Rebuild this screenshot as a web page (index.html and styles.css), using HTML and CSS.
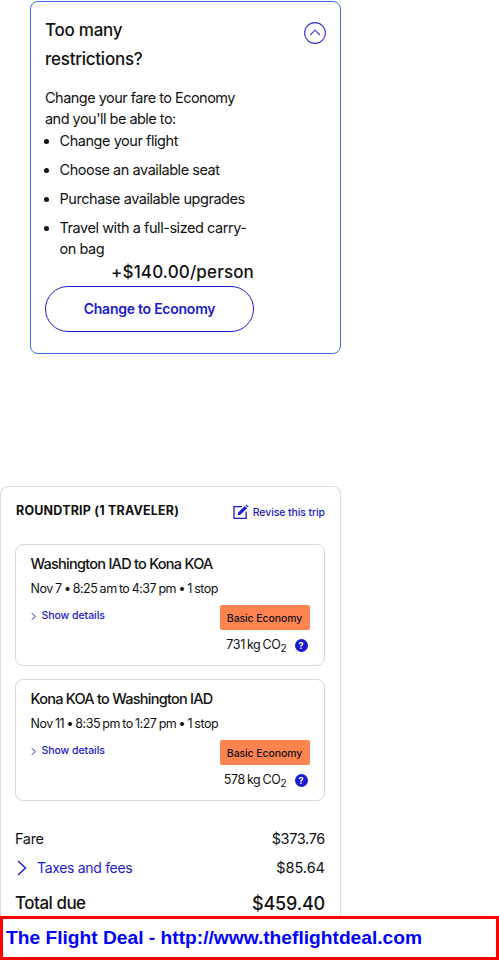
FILE: index.html
```html
<!DOCTYPE html>
<html lang="en">
<head>
<meta charset="utf-8">
<title>Trip summary</title>
<link rel="stylesheet" href="styles.css">
</head>
<body>
<main class="page">
  <section class="upsell">
    <div class="upsell-head">
      <h2 class="upsell-title">Too many restrictions?</h2>
      <svg class="collapse" viewBox="0 0 22 22" aria-hidden="true"><circle cx="11" cy="11" r="10.4"/><path d="M6.2 13 L11 8.2 L15.8 13"/></svg>
    </div>
    <p class="upsell-intro">Change your fare to Economy and you'll be able to:</p>
    <ul class="perks">
      <li>Change your flight</li>
      <li>Choose an available seat</li>
      <li>Purchase available upgrades</li>
      <li>Travel with a full-sized carry-on bag</li>
    </ul>
    <div class="upsell-action">
      <div class="price">+$140.00/person</div>
      <button class="outline-btn">Change to Economy</button>
    </div>
  </section>

  <section class="summary">
    <div class="summary-head">
      <h2 class="summary-title">ROUNDTRIP (1 TRAVELER)</h2>
      <a class="revise">
        <svg viewBox="0 0 16 16" aria-hidden="true"><path class="edit-frame" d="M9 2.6 H1 V14.4 H13.2 V7.5"/><path class="edit-pen" d="M5.2 8.6 L11.8 2 L14 4.2 L7.4 10.8 L4.8 11.2 Z"/><path class="edit-pen" d="M12.6 1.2 L13.4 0.4 L15.6 2.6 L14.8 3.4 Z"/></svg>
        Revise this trip
      </a>
    </div>

    <article class="leg">
      <h3 class="leg-title">Washington IAD to Kona KOA</h3>
      <p class="leg-time">Nov 7 • 8:25 am to 4:37 pm • 1 stop</p>
      <div class="leg-row">
        <a class="details"><svg viewBox="0 0 6 10" aria-hidden="true"><path d="M1 1 L5 5 L1 9"/></svg>Show details</a>
        <div class="leg-fare">
          <span class="badge">Basic Economy</span>
          <div class="co2"><span>731 kg CO<sub>2</sub></span><span class="help">?</span></div>
        </div>
      </div>
    </article>

    <article class="leg">
      <h3 class="leg-title">Kona KOA to Washington IAD</h3>
      <p class="leg-time">Nov 11 • 8:35 pm to 1:27 pm • 1 stop</p>
      <div class="leg-row">
        <a class="details"><svg viewBox="0 0 6 10" aria-hidden="true"><path d="M1 1 L5 5 L1 9"/></svg>Show details</a>
        <div class="leg-fare">
          <span class="badge">Basic Economy</span>
          <div class="co2"><span>578 kg CO<sub>2</sub></span><span class="help">?</span></div>
        </div>
      </div>
    </article>

    <div class="cost-row fare-row"><span>Fare</span><span>$373.76</span></div>
    <div class="cost-row taxes-row">
      <a class="taxes"><svg viewBox="0 0 10 16" aria-hidden="true"><path d="M1 1 L8.5 8 L1 15"/></svg>Taxes and fees</a>
      <span class="tax-amount">$85.64</span>
    </div>
    <div class="cost-row total-row"><span>Total due</span><span class="total-amount">$459.40</span></div>
  </section>
</main>
<div class="banner">The Flight Deal - http://www.theflightdeal.com</div>
</body>
</html>
```
FILE: styles.css
```css
* { box-sizing: border-box; }
html, body { margin: 0; height: 960px; overflow: hidden; }
body { background: #fff; color: #111; font-family: Inter, "Noto Sans", sans-serif; position: relative; }
h2, h3, p, ul { margin: 0; padding: 0; }
.page { width: 341px; padding-top: 1px; }

.upsell { margin-left: 30px; width: 311px; height: 353px; border: 1px solid #3a6fe6; border-radius: 8px; padding: 14px 14px 0; }
.upsell-head { display: flex; justify-content: space-between; }
.upsell-title { width: 130px; font-size: 17px; font-weight: 500; line-height: 29px; letter-spacing: -0.25px; }
.collapse { width: 22px; height: 22px; margin: 6px 0 0; fill: none; stroke: #3a3ad8; stroke-width: 1.1; }
.upsell-intro { width: 200px; margin-top: 13px; font-size: 14.5px; line-height: 21px; letter-spacing: -0.52px; }
.perks { width: 204px; padding-left: 14.5px; font-size: 14.5px; line-height: 21.5px; letter-spacing: -0.45px; margin-top: 1px; }
.perks li { margin-bottom: 7.4px; }
.perks li:last-child { margin-bottom: 0; }
.upsell-action { width: 209px; }
.price { text-align: right; font-size: 17px; font-weight: 500; line-height: 24px; letter-spacing: 0.15px; margin-top: 0.4px; }
.outline-btn { display: block; width: 209px; height: 46px; margin-top: 1.6px; padding: 0; background: #fff; border: 1px solid #1a1ad0; border-radius: 23px; color: #1a1ad0; font: 600 14px Inter, sans-serif; letter-spacing: -0.25px; }

.summary { margin-top: 132px; height: 480px; border: 1px solid #dcdcdc; border-bottom: 0; border-radius: 8px 8px 0 0; padding: 15px 15px 0; }
.summary-head { display: flex; justify-content: space-between; align-items: center; height: 20px; margin-bottom: 22px; }
.summary-title { font-size: 12.5px; font-weight: 700; letter-spacing: 0.2px; line-height: 20px; margin-top: -3px; }
.revise { display: flex; align-items: center; gap: 4px; color: #1a1ad0; font-size: 10.5px; font-weight: 500; letter-spacing: -0.1px; }
.revise svg { width: 16px; height: 16px; }
.edit-frame { fill: none; stroke: #1a1ad0; stroke-width: 1.3; }
.edit-pen { fill: #1a1ad0; }

.leg { width: 310px; height: 122px; margin-left: -1px; margin-bottom: 13px; border: 1px solid #d9d9d9; border-radius: 8px; padding: 10px 14.5px 0; }
.leg-title { font-size: 14.5px; font-weight: 500; line-height: 18px; letter-spacing: -0.74px; }
.leg-time { margin-top: 6.5px; font-size: 12.5px; line-height: 17px; letter-spacing: -0.5px; word-spacing: -0.7px; }
.leg-row { display: flex; justify-content: space-between; align-items: flex-start; margin-top: 8.5px; }
.details { display: flex; align-items: center; gap: 6px; color: #1a1ad0; font-size: 10.5px; font-weight: 500; line-height: 14px; letter-spacing: -0.05px; margin-top: 4px; }
.details svg { width: 5px; height: 9px; fill: none; stroke: #1a1ad0; stroke-width: 1.2; }
.leg-fare { display: flex; flex-direction: column; align-items: flex-end; }
.badge { display: block; width: 90px; height: 25px; background: #ff8450; border-radius: 2px; color: #111; font-size: 10.5px; font-weight: 500; line-height: 27px; text-align: center; letter-spacing: -0.1px; }
.co2 { display: flex; align-items: center; gap: 8px; margin-top: 6px; margin-right: 2px; font-size: 12.5px; line-height: 18px; letter-spacing: -0.4px; word-spacing: -1px; }
.co2 sub { font-size: 10px; line-height: 0; vertical-align: -3px; letter-spacing: 0; }
.help { display: block; width: 13px; height: 13px; border-radius: 50%; background: #1a1ad0; color: #fff; font-size: 9px; font-weight: 700; line-height: 13px; text-align: center; letter-spacing: 0; }

.cost-row { display: flex; justify-content: space-between; align-items: center; width: 310px; margin-left: -1px; font-size: 14.5px; letter-spacing: -0.35px; }
.fare-row { margin-top: 27px; height: 20px; }
.taxes-row { margin-top: 9.5px; height: 20px; }
.taxes { display: flex; align-items: center; gap: 10px; color: #1a1ad0; font-size: 14px; letter-spacing: -0.32px; padding-left: 2px; }
.taxes svg { width: 10px; height: 16px; fill: none; stroke: #1a1ad0; stroke-width: 1.4; }
.tax-amount { letter-spacing: 0; }
.total-row { margin-top: 13.5px; height: 24px; font-size: 17px; font-weight: 500; letter-spacing: -0.5px; }
.total-amount { font-size: 18px; letter-spacing: -0.2px; }

.banner { position: absolute; left: 0; top: 916px; width: 499px; height: 44px; border: 3px solid #f00; background: #fff; color: #00f; font-family: "Liberation Sans", Arial, sans-serif; font-size: 19.2px; font-weight: 700; line-height: 38px; padding-left: 3px; }
```
